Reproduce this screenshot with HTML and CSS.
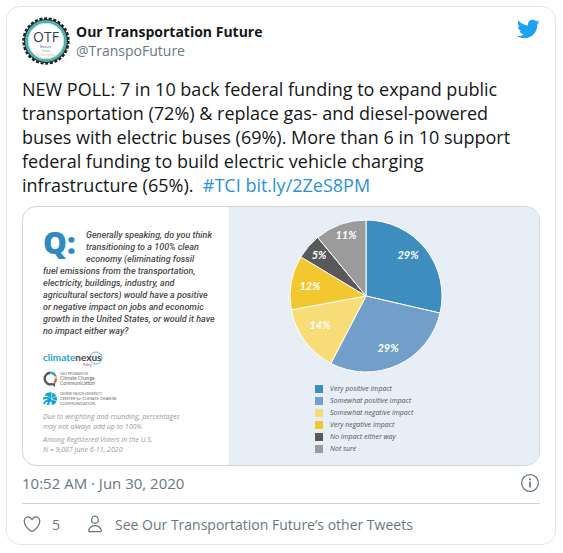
FILE: index.html
```html
<!DOCTYPE html>
<html lang="en">
<head>
    <meta charset="UTF-8">
    <meta name="viewport" content="width=device-width, initial-scale=1.0">
    <title>Our Transportation Future</title>
    <link rel="stylesheet" href="styles.css">
</head>
<body>
    <article class="tweet">
        <header class="tweet-header">
            <a class="author" href="#">
                <svg class="avatar" viewBox="0 0 48 48" aria-hidden="true">
                    <circle cx="24" cy="24" r="22" fill="#222"/>
                    <circle cx="24" cy="24" r="22.5" fill="none" stroke="#222" stroke-width="2.4" stroke-dasharray="3 1.7"/>
                    <circle cx="24" cy="24" r="19.5" fill="#fff" stroke="#4fb0ac" stroke-width="3"/>
                    <circle cx="24" cy="24" r="17.6" fill="none" stroke="#bfe3e0" stroke-width="1"/>
                    <text class="avatar-title" x="24" y="25" text-anchor="middle">OTF</text>
                    <text class="avatar-line" x="24" y="31" text-anchor="middle" fill="#4448b0">Modern.</text>
                    <text class="avatar-line" x="24" y="35" text-anchor="middle" fill="#4aa3d8">Clean.</text>
                    <text class="avatar-line" x="24" y="39" text-anchor="middle" fill="#f5a83a">For Everyone.</text>
                </svg>
                <span class="author-text">
                    <span class="name">Our Transportation Future</span>
                    <span class="handle">@TranspoFuture</span>
                </span>
            </a>
            <a class="bird" href="#" aria-label="View on Twitter">
                <svg viewBox="0 0 24 24" width="24" height="24">
                    <path fill="#1da1f2" d="M23.643 4.937c-.835.37-1.732.62-2.675.733.962-.576 1.7-1.49 2.048-2.578-.9.534-1.897.922-2.958 1.13-.85-.904-2.06-1.47-3.4-1.47-2.572 0-4.658 2.086-4.658 4.66 0 .364.042.718.12 1.06-3.873-.195-7.304-2.05-9.602-4.868-.4.69-.63 1.49-.63 2.342 0 1.616.823 3.043 2.072 3.878-.764-.025-1.482-.234-2.11-.583v.06c0 2.257 1.605 4.14 3.737 4.568-.392.106-.803.162-1.227.162-.3 0-.593-.028-.877-.082.593 1.85 2.313 3.198 4.352 3.234-1.595 1.25-3.604 1.995-5.786 1.995-.376 0-.747-.022-1.112-.065 2.062 1.323 4.51 2.093 7.14 2.093 8.57 0 13.255-7.098 13.255-13.254 0-.2-.005-.402-.014-.602.91-.658 1.7-1.477 2.323-2.41z"/>
                </svg>
            </a>
        </header>

        <p class="tweet-text">NEW POLL: 7 in 10 back federal funding to expand public transportation (72%) &amp; replace gas- and diesel-powered buses with electric buses (69%). More than 6 in 10 support federal funding to build electric vehicle charging infrastructure (65%).&nbsp; <a href="#">#TCI</a> <a href="#">bit.ly/2ZeS8PM</a></p>

        <div class="media">
            <section class="question">
                <p class="question-text"><span class="question-mark">Q:</span>Generally speaking, do you think<br>transitioning to a 100% clean<br>economy (eliminating fossil<br>fuel emissions from the transportation,<br>electricity, buildings, industry, and<br>agricultural sectors) would have a positive<br>or negative impact on jobs and economic<br>growth in the United States, or would it have<br>no impact either way?</p>

                <div class="logo nexus">
                    <svg viewBox="0 0 64 16" width="64" height="16">
                        <circle cx="53" cy="7" r="6" fill="none" stroke="#56b7d8" stroke-width="1"/>
                        <text class="nexus-name" x="0" y="10"><tspan fill="#1fa3cc">climate</tspan><tspan fill="#444">nexus</tspan></text>
                        <text class="nexus-sub" x="40" y="15">Polling</text>
                    </svg>
                </div>
                <div class="logo">
                    <svg viewBox="0 0 16 18" width="16" height="18">
                        <g fill="none" stroke-width="2.4">
                            <path stroke="#55585c" d="M7.500 2.800A5.800 5.800 0 1 0 9 14.200"/>
                            <path stroke="#25b0c0" d="M7.500 2.800A5.800 5.800 0 0 1 12.500 6"/>
                            <path stroke="#f2c230" d="M12.500 6A5.800 5.800 0 0 1 13 9"/>
                            <path stroke="#e2574c" d="M13 9A5.800 5.800 0 0 1 11.500 12.600"/>
                        </g>
                        <path fill="#55585c" d="M7 13.500l5-.5v4z"/>
                    </svg>
                    <p class="logo-text yale"><small>YALE PROGRAM ON</small>Climate Change<br>Communication</p>
                </div>
                <div class="logo">
                    <svg viewBox="0 0 16 16" width="16" height="16">
                        <path fill="#12a4d4" d="M1.500 4.500C3 1.500 7 .500 10 2c4 2 5 6 3 9.400-1 1.500-2.500 2.300-4 2.600L8 8.500C6 5.500 4 4.500 1.500 4.500z"/>
                        <path fill="none" stroke="#12a4d4" stroke-width="2" d="M0 8c3-2 6-1 8 1M1 13c1-3 4-4 7-4M5 14c0-2 1-4 3-5"/>
                        <path fill="none" stroke="#fff" stroke-width=".6" d="M8 8l1-6M8 8l5-3M8 8l6 2"/>
                    </svg>
                    <p class="logo-text mason"><small>GEORGE MASON UNIVERSITY</small>CENTER for CLIMATE CHANGE<br>COMMUNICATION</p>
                </div>

                <p class="note">Due to weighting and rounding, percentages<br>may not always add up to 100%</p>
                <p class="note">Among Registered Voters in the U.S.<br>N = 9,087 June 6-11, 2020</p>
            </section>

            <section class="results">
                <svg class="pie" viewBox="-77 -77 154 154" role="img" aria-label="Poll results">
                    <g stroke="#fff" stroke-width="1">
                        <path fill="#3d8dbf" d="M0 0V-76A76 76 0 0 1 74.100 17.100z"/>
                        <path fill="#719fca" d="M0 0L74.100 17.100A76 76 0 0 1-35.100 67.400z"/>
                        <path fill="#f7dc78" d="M0 0L-35.100 67.400A76 76 0 0 1-74.700 13.900z"/>
                        <path fill="#f3c730" d="M0 0L-74.700 13.900A76 76 0 0 1-65.100-39.100z"/>
                        <path fill="#595959" d="M0 0L-65.100-39.100A76 76 0 0 1-48.300-58.600z"/>
                        <path fill="#9b9b9b" d="M0 0L-48.300-58.600A76 76 0 0 1 0-76z"/>
                    </g>
                    <g class="pie-labels" text-anchor="middle">
                        <text x="42" y="-37">29%</text>
                        <text x="22" y="56">29%</text>
                        <text x="-46" y="33">14%</text>
                        <text x="-56" y="-6">12%</text>
                        <text x="-47" y="-37">5%</text>
                        <text x="-20" y="-57">11%</text>
                    </g>
                </svg>
                <ul class="legend">
                    <li class="very-positive">Very positive impact</li>
                    <li class="some-positive">Somewhat positive impact</li>
                    <li class="some-negative">Somewhat negative impact</li>
                    <li class="very-negative">Very negative impact</li>
                    <li class="no-impact">No impact either way</li>
                    <li class="not-sure">Not sure</li>
                </ul>
            </section>
        </div>

        <div class="meta">
            <a href="#"><time datetime="2020-06-30T10:52">10:52 AM · Jun 30, 2020</time></a>
            <a href="#" aria-label="Twitter Ads info and privacy">
                <svg viewBox="0 0 20 20" width="20" height="20">
                    <circle cx="10" cy="10" r="8.400" fill="none" stroke="#697882" stroke-width="1.300"/>
                    <circle cx="10" cy="6.300" r="1.100" fill="#697882"/>
                    <path fill="#697882" d="M9.200 8.600h1.700v5.800H9.200z"/>
                </svg>
            </a>
        </div>

        <footer class="actions">
            <a class="like" href="#">
                <svg viewBox="0 0 24 24" width="20" height="20">
                    <path fill="#697882" d="M12 21.638h-.014C9.403 21.590 1.950 14.856 1.950 8.478c0-3.064 2.525-5.754 5.403-5.754 2.290 0 3.830 1.580 4.646 2.730.814-1.148 2.354-2.730 4.645-2.730 2.880 0 5.404 2.690 5.404 5.755 0 6.376-7.454 13.110-10.037 13.157H12zM7.354 4.225c-2.080 0-3.903 1.988-3.903 4.255 0 5.740 7.034 11.596 8.550 11.658 1.518-.062 8.550-5.917 8.550-11.658 0-2.267-1.823-4.255-3.903-4.255-2.528 0-3.940 2.936-3.952 2.965-.23.562-1.156.562-1.387 0-.014-.03-1.425-2.965-3.954-2.965z"/>
                </svg>
                <span>5</span>
            </a>
            <a class="more" href="#">
                <svg viewBox="0 0 24 24" width="20" height="20">
                    <path fill="#697882" d="M12 11.816c1.355 0 2.872-.150 3.840-1.256.814-.930 1.078-2.368.806-4.392-.380-2.825-2.117-4.512-4.646-4.512S7.734 3.343 7.354 6.170c-.272 2.022-.008 3.460.806 4.390.968 1.107 2.485 1.256 3.840 1.256zM8.840 6.368c.162-1.200.787-3.212 3.160-3.212s2.998 2.013 3.160 3.212c.207 1.550.057 2.627-.450 3.205-.455.520-1.266.743-2.710.743s-2.255-.223-2.710-.743c-.507-.578-.657-1.656-.450-3.205zm11.440 12.868c-.877-3.526-4.282-5.990-8.280-5.990s-7.403 2.464-8.280 5.990c-.172.692-.028 1.400.395 1.940.408.520 1.040.820 1.733.820h12.304c.693 0 1.325-.300 1.733-.820.424-.540.567-1.247.394-1.940zm-1.576 1.016c-.126.160-.316.246-.552.246H5.848c-.235 0-.426-.085-.552-.246-.137-.174-.180-.412-.120-.654.710-2.855 3.517-4.850 6.824-4.850s6.114 1.994 6.824 4.850c.060.242.017.480-.120.654z"/>
                </svg>
                <span>See Our Transportation Future’s other Tweets</span>
            </a>
        </footer>
    </article>
</body>
</html>
```
FILE: styles.css
```css
* {
    box-sizing: border-box;
}

body {
    margin: 6px 7px 6px 6px;
    background: #fff;
    color: #14171a;
    font-family: 'Segoe UI', 'Open Sans', sans-serif;
}

a {
    color: inherit;
    text-decoration: none;
}

p, ul {
    margin: 0;
    padding: 0;
}

svg {
    display: block;
    flex: none;
}

.tweet {
    padding: 10px 15px 8px;
    border: 1px solid #e1e8ed;
    border-radius: 14px;
}

.tweet-header {
    display: flex;
    justify-content: space-between;
    align-items: flex-start;
}

.author {
    display: flex;
    align-items: center;
    gap: 6px;
}

.avatar {
    width: 48px;
    height: 48px;
}

.avatar-title {
    font: 14px 'Open Sans', sans-serif;
    fill: #2f4255;
}

.avatar-line {
    font: 3px 'Open Sans', sans-serif;
}

.author-text {
    display: flex;
    flex-direction: column;
    line-height: 19px;
}

.name {
    font-size: 14px;
    font-weight: 700;
}

.handle {
    font-size: 14px;
    color: #697882;
}

.tweet-text {
    margin: 12px 0 9px;
    font-size: 18px;
    line-height: 24px;
}

.tweet-text a {
    color: #2b91d9;
}

.media {
    display: grid;
    grid-template-columns: 2fr 3fr;
    border: 1px solid #ccd6dd;
    border-radius: 14px;
    overflow: hidden;
    font-style: italic;
}

.question {
    padding: 22px 0 10px 20px;
    white-space: nowrap;
}

.question-text {
    font-family: 'Roboto', sans-serif;
    font-size: 9px;
    font-weight: 500;
    line-height: 12px;
    color: #4a4a4a;
}

.question-mark {
    float: left;
    width: 43px;
    height: 36px;
    font: 800 30px/28px 'Open Sans', sans-serif;
    color: #2f8bc0;
}

.logo {
    display: flex;
    align-items: center;
    gap: 1px;
    height: 20px;
    font-style: normal;
}

.nexus {
    margin-top: 12px;
}

.nexus-name {
    font: 700 10px 'Lato', sans-serif;
}

.nexus-sub {
    font: 3px 'Lato', sans-serif;
    fill: #b0405a;
}

.logo-text {
    font-family: 'Lato', sans-serif;
    line-height: 5px;
    color: #66696c;
}

.logo-text small {
    display: block;
    font-size: 3px;
    line-height: 4px;
}

.yale {
    font-size: 5px;
}

.mason {
    font-size: 4px;
}

.note {
    margin-top: 3px;
    font-size: 7px;
    line-height: 10px;
    color: #999;
}

.results {
    display: flex;
    flex-direction: column;
    align-items: center;
    padding: 12px 36px 0 0;
    background: #e7eef6;
}

.pie {
    width: 154px;
    height: 154px;
}

.pie-labels {
    font: italic 700 11px 'Lato', sans-serif;
    fill: #fff;
}

.legend {
    margin: 10px 4px 0 0;
    list-style: none;
    font-size: 7px;
    font-weight: 500;
    line-height: 12px;
    color: #555;
}

.legend li {
    display: flex;
    align-items: center;
    gap: 7px;
}

.legend li::before {
    content: "";
    width: 8px;
    height: 8px;
    background: currentColor;
}

.legend .very-positive::before { background: #3d8dbf; }
.legend .some-positive::before { background: #719fca; }
.legend .some-negative::before { background: #f7dc78; }
.legend .very-negative::before { background: #f3c730; }
.legend .no-impact::before { background: #595959; }
.legend .not-sure::before { background: #9b9b9b; }

.meta {
    display: flex;
    align-items: center;
    justify-content: space-between;
    height: 38px;
    padding-bottom: 3px;
    border-bottom: 1px solid #ccd6dd;
    font-size: 15px;
    color: #697882;
}

.actions {
    display: flex;
    align-items: center;
    gap: 25px;
    height: 32px;
    padding-top: 8px;
    font-size: 14px;
    color: #697882;
}

.like, .more {
    display: flex;
    align-items: center;
    gap: 10px;
}
```
